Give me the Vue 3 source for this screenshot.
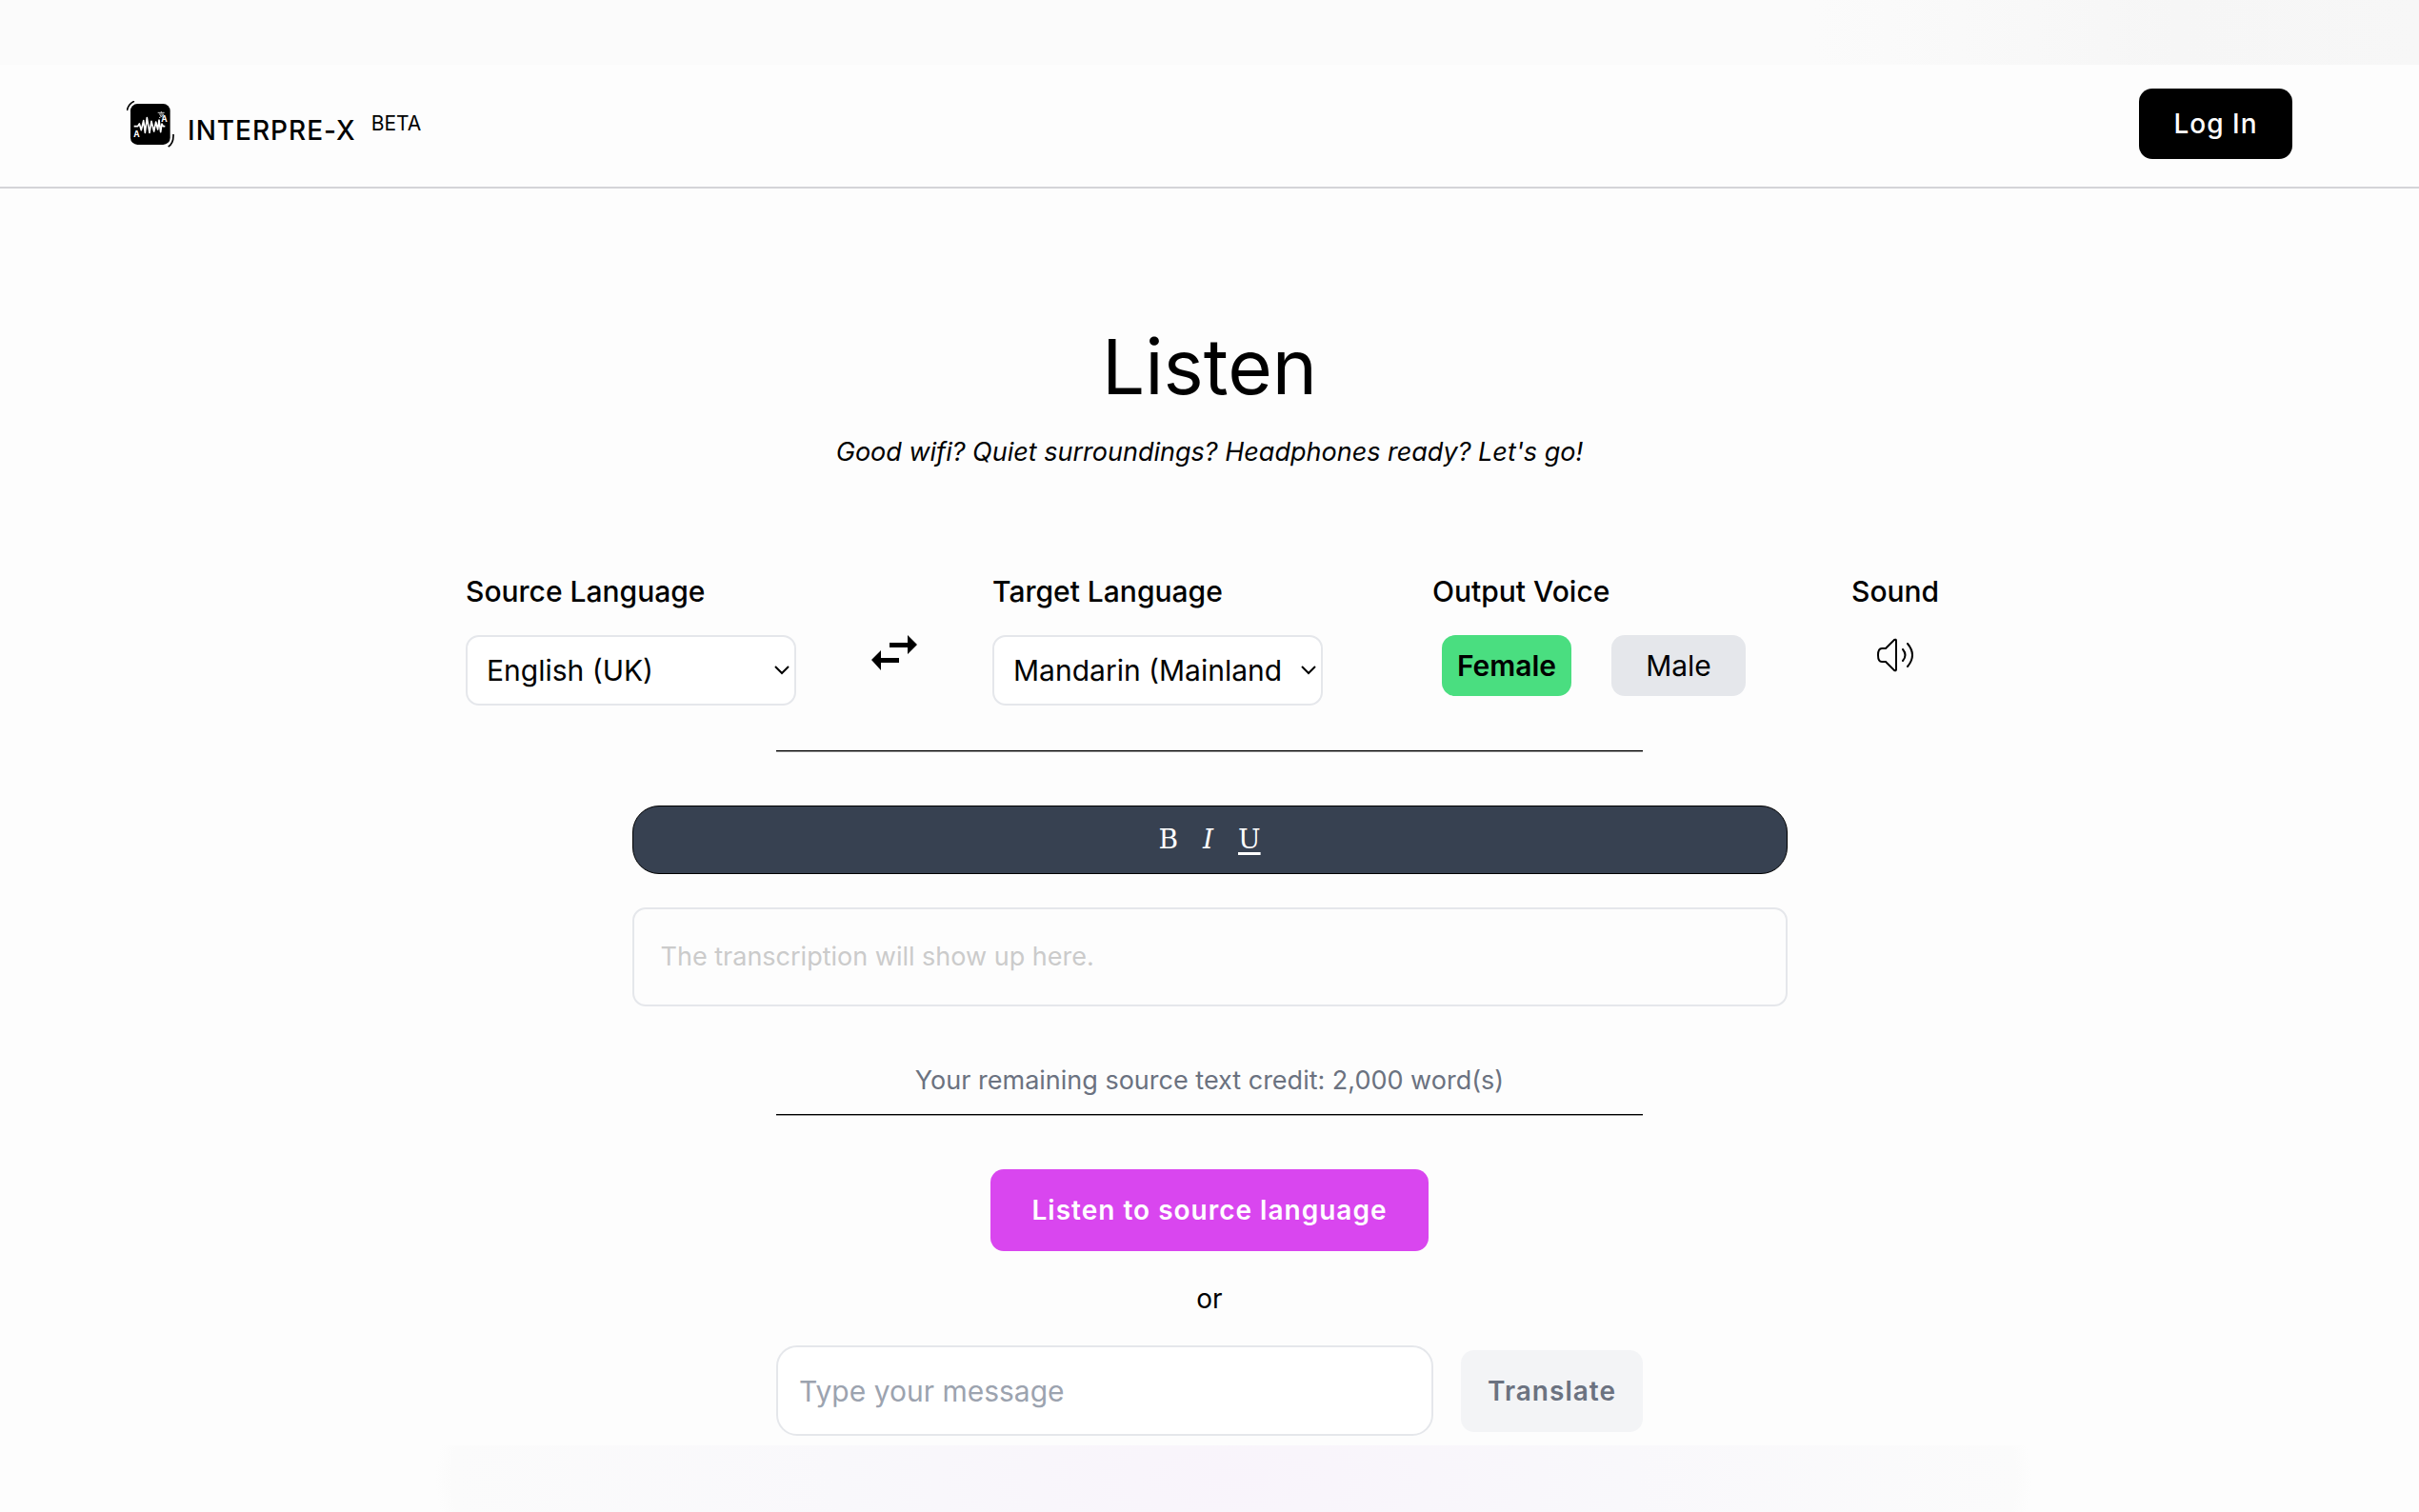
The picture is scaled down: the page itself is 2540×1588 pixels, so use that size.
<script setup>
import { ref } from 'vue'

const source = ref('en-GB')
const target = ref('cmn-CN')
const voice = ref('female')
const message = ref('')
</script>

<template>
  <div class="page">
    <div class="strip strip-top"></div>

    <header class="header">
      <a class="brand" href="#">
        <svg class="logo" viewBox="0 0 150 147" aria-hidden="true">
          <rect x="12" y="9" width="125" height="129" rx="22" fill="#000" />
          <path d="M1 30C4 17 12 6 24 1" fill="none" stroke="#000" stroke-width="5" />
          <path d="M147 105C148 124 143 137 131 144" fill="none" stroke="#000" stroke-width="5" />
          <path
            d="M23 80H35L40 72L46 92L53 62L58 100L64 53L72 100L78 64L86 96L92 66L98 90L102 60L107 98L111 72L115 80H121"
            fill="none"
            stroke="#fff"
            stroke-width="5"
            stroke-linejoin="round"
          />
          <path d="M98 37H119M109 33V37M102 42H116M116 42C113 47 109 50 102 53M105 45L113 51" fill="none" stroke="#ccc" stroke-width="3" />
          <text x="22" y="113" class="glyph">A</text>
          <text x="109" y="66" class="glyph">A</text>
        </svg>
        <span class="name">INTERPRE-X</span>
        <span class="beta">BETA</span>
      </a>
      <button class="login" type="button">Log In</button>
    </header>

    <main class="main">
      <h1>Listen</h1>
      <p class="tagline">Good wifi? Quiet surroundings? Headphones ready? Let's go!</p>

      <section class="settings">
        <div class="field">
          <label class="label" for="source">Source Language</label>
          <div class="select">
            <select id="source" v-model="source">
              <option value="en-GB">English (UK)</option>
            </select>
            <svg class="chevron" viewBox="0 0 16 10" aria-hidden="true"><path d="M1 1L8 8L15 1" /></svg>
          </div>
        </div>

        <button class="swap" type="button" aria-label="Swap languages">
          <svg viewBox="0 0 48 37" aria-hidden="true">
            <path d="M19 8H38V0L48 10L38 20V13H19ZM29 24H10V16L0 26L10 37V29H29Z" />
          </svg>
        </button>

        <div class="field">
          <label class="label" for="target">Target Language</label>
          <div class="select">
            <select id="target" v-model="target">
              <option value="cmn-CN">Mandarin (Mainland</option>
            </select>
            <svg class="chevron" viewBox="0 0 16 10" aria-hidden="true"><path d="M1 1L8 8L15 1" /></svg>
          </div>
        </div>

        <div class="field voice">
          <span class="label">Output Voice</span>
          <div class="voices">
            <button type="button" class="pill female" @click="voice = 'female'">Female</button>
            <button type="button" class="pill male" @click="voice = 'male'">Male</button>
          </div>
        </div>

        <div class="field sound">
          <span class="label">Sound</span>
          <button class="speaker" type="button" aria-label="Sound">
            <svg viewBox="0 0 40 36" aria-hidden="true">
              <path d="M21 3V33Q21 35 19 34L10 25H6Q2 25 2 18T6 11H10L19 2Q21 1 21 3Z" />
              <path d="M28 12Q33 18 28 24M33 6Q43 18 33 30" />
            </svg>
          </button>
        </div>
      </section>

      <hr />

      <div class="toolbar">
        <button type="button" class="bold">B</button>
        <button type="button" class="italic">I</button>
        <button type="button" class="underline">U</button>
      </div>

      <div class="transcript">The transcription will show up here.</div>

      <p class="credit">Your remaining source text credit: 2,000 word(s)</p>
      <hr />

      <button class="listen" type="button">Listen to source language</button>
      <p class="or">or</p>

      <form class="compose" @submit.prevent>
        <input v-model="message" type="text" placeholder="Type your message" aria-label="Message" />
        <button class="translate" type="submit">Translate</button>
      </form>
    </main>

    <div class="strip strip-bottom"></div>
  </div>
</template>

<style>
body {
  background: #fdfdfd;
}
</style>

<style scoped>
.page {
  display: flex;
  flex-direction: column;
  min-height: 100vh;
  color: #000;
  font-family: Inter, "Liberation Sans", sans-serif;
  font-size: 28px;
  line-height: 40px;
}
* {
  box-sizing: border-box;
}
h1,
p,
hr {
  margin: 0;
}
button,
select,
input {
  padding: 0;
  border: 0;
  color: inherit;
  font: inherit;
}
button {
  background: none;
  cursor: pointer;
}
.strip-top {
  height: 68px;
  background: linear-gradient(90deg, #fbfbfb 75%, #f6f6f6 90%, #f7f7f7);
}
.strip-bottom {
  flex: 1;
  min-height: 68px;
  background: radial-gradient(ellipse 33% 300px at 51% 50%, #f9f4fb, #f9f8fb 50%, #fbfbfb 98%, #fdfdfd);
}
.header {
  display: flex;
  align-items: center;
  justify-content: space-between;
  height: 130px;
  padding: 0 133px 4px;
  border-bottom: 2px solid #d4d4d8;
}
.brand {
  display: flex;
  align-items: center;
  color: inherit;
  text-decoration: none;
}
.logo {
  width: 50px;
  height: 49px;
}
.glyph {
  fill: #fff;
  font-size: 26px;
  font-weight: 700;
}
.name {
  margin: 14px 16px 0 14px;
  font-weight: 500;
  letter-spacing: 1px;
}
.beta {
  font-size: 21px;
}
.login {
  width: 161px;
  height: 74px;
  border-radius: 14px;
  background: #000;
  color: #fff;
  font-weight: 500;
  letter-spacing: 1px;
}
.main {
  display: flex;
  flex-direction: column;
  align-items: center;
  padding: 136px 32px 10px;
}
h1 {
  font-size: 80px;
  font-weight: 400;
  line-height: 102px;
}
.tagline {
  margin-top: 19px;
  font-style: italic;
}
.tagline,
.transcript,
.credit {
  font-size: 27px;
}
.settings {
  display: flex;
  gap: 79px;
  width: 100%;
  max-width: 1562px;
  margin-top: 106px;
  font-size: 30px;
}
.field {
  display: flex;
  flex-direction: column;
  gap: 26px;
}
.label {
  font-weight: 500;
}
.select {
  position: relative;
  width: 347px;
}
.select select {
  width: 100%;
  height: 74px;
  padding: 0 20px;
  border: 2px solid #e5e7eb;
  border-radius: 14px;
  background: #fff;
  appearance: none;
}
.chevron {
  position: absolute;
  top: 32px;
  right: 7px;
  width: 16px;
  height: 10px;
  fill: none;
  stroke: #000;
  stroke-width: 2;
  pointer-events: none;
}
.swap {
  width: 48px;
  height: 37px;
  margin-top: 66px;
}
.swap svg,
.speaker svg {
  display: block;
  width: 100%;
  height: 100%;
}
.voice {
  margin-left: 36px;
}
.voices {
  display: flex;
  gap: 42px;
  padding-left: 10px;
}
.pill {
  height: 64px;
  border-radius: 14px;
}
.female {
  width: 136px;
  background: #4ade80;
  font-weight: 600;
}
.male {
  width: 141px;
  background: #e5e7eb;
}
.sound {
  align-items: center;
  margin-left: 32px;
}
.speaker {
  width: 40px;
  height: 36px;
  margin-top: 3px;
  fill: none;
  stroke: #000;
  stroke-width: 2;
  stroke-linecap: round;
}
hr {
  width: 910px;
  max-width: 100%;
  height: 2px;
  border: 0;
  background: linear-gradient(#000 50%, #999 50%);
}
.settings + hr {
  margin-top: 47px;
}
.toolbar {
  display: flex;
  align-items: center;
  justify-content: center;
  gap: 26px;
  width: 100%;
  max-width: 1213px;
  height: 72px;
  margin-top: 56px;
  border: 1px solid #000;
  border-radius: 28px;
  background: #374151;
  color: #fff;
  font-family: "DejaVu Serif", serif;
  font-size: 28px;
}
.italic {
  font-style: italic;
}
.underline {
  text-decoration: underline;
  text-decoration-thickness: 3px;
  text-underline-offset: 4px;
}
.transcript {
  width: 100%;
  max-width: 1213px;
  margin-top: 35px;
  padding: 30px 28px;
  border: 2px solid #e5e7eb;
  border-radius: 14px;
  color: #cbcbcb;
}
.credit {
  margin: 58px 0 15px;
  color: #6b7280;
}
.listen {
  width: 460px;
  height: 86px;
  margin-top: 56px;
  border-radius: 14px;
  background: #d946ef;
  color: #fff;
  font-weight: 600;
  letter-spacing: 1px;
}
.or {
  margin-top: 30px;
}
.compose {
  display: flex;
  align-items: center;
  gap: 29px;
  width: 100%;
  max-width: 910px;
  margin-top: 29px;
}
.compose input {
  flex: 1;
  min-width: 0;
  height: 95px;
  padding: 0 22px;
  border: 2px solid #e5e7eb;
  border-radius: 22px;
  background: #fff;
  font-size: 30px;
}
.compose input::placeholder {
  color: #9ca3af;
}
.translate {
  width: 191px;
  height: 86px;
  border-radius: 14px;
  background: #f3f4f6;
  color: #6b7280;
  font-weight: 600;
  letter-spacing: 1px;
}
</style>
